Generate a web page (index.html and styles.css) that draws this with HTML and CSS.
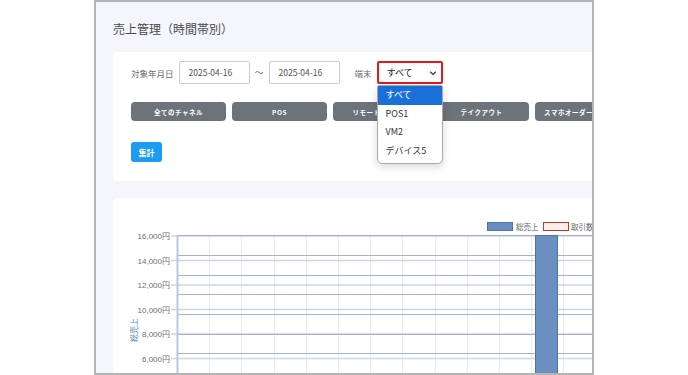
FILE: index.html
```html
<!DOCTYPE html>
<html lang="ja">
<head>
    <meta charset="UTF-8">
    <meta name="viewport" content="width=device-width, initial-scale=1.0">
    <title>売上管理（時間帯別）</title>
    <link rel="stylesheet" href="styles.css">
</head>
<body>

    <div class="frame">
        <div class="page">
            <h2 class="page-title">売上管理（時間帯別）</h2>

            <!-- Search conditions -->
            <div class="card search-card">
                <div class="filter-row">
                    <span class="filter-label">対象年月日</span>
                    <div class="date-input">2025-04-16</div>
                    <span class="tilde">〜</span>
                    <div class="date-input">2025-04-16</div>
                    <span class="filter-label terminal-label">端末</span>
                    <div class="select-wrap">
                        <div class="select-box">
                            <span>すべて</span>
                            <svg class="chevron" width="8" height="6" viewBox="0 0 8 6"><path d="M1.2 1.8 L4 4.4 L6.8 1.8" fill="none" stroke="#333" stroke-width="1.2"/></svg>
                        </div>
                        <ul class="dropdown">
                            <li class="selected">すべて</li>
                            <li>POS1</li>
                            <li>VM2</li>
                            <li>デバイス5</li>
                        </ul>
                    </div>
                </div>

                <!-- Channel buttons -->
                <div class="channel-row">
                    <button class="channel-btn">全てのチャネル</button>
                    <button class="channel-btn">POS</button>
                    <button class="channel-btn">リモートオーダー</button>
                    <button class="channel-btn">テイクアウト</button>
                    <button class="channel-btn">スマホオーダー（店内）</button>
                </div>

                <button class="submit-btn">集計</button>
            </div>

            <!-- Chart -->
            <div class="card chart-card">
                <svg class="chart" width="480" height="180" viewBox="0 0 480 180">
                    <!-- legend -->
                    <rect x="374.5" y="24.5" width="25" height="8" fill="#6a8fc0" stroke="#4a74b0"/>
                    <text x="403" y="31.5" class="legend-text">総売上</text>
                    <rect x="430.5" y="24.5" width="25" height="8" fill="#fdeeee" stroke="#c0392b"/>
                    <text x="458" y="31.5" class="legend-text">取引数</text>

                    <!-- vertical grid -->
                    <g stroke="#e9ebf0" stroke-width="1">
                        <line x1="96.5" y1="37" x2="96.5" y2="180"/>
                        <line x1="128.5" y1="37" x2="128.5" y2="180"/>
                        <line x1="161.5" y1="37" x2="161.5" y2="180"/>
                        <line x1="193.5" y1="37" x2="193.5" y2="180"/>
                        <line x1="225.5" y1="37" x2="225.5" y2="180"/>
                        <line x1="257.5" y1="37" x2="257.5" y2="180"/>
                        <line x1="289.5" y1="37" x2="289.5" y2="180"/>
                        <line x1="322.5" y1="37" x2="322.5" y2="180"/>
                        <line x1="354.5" y1="37" x2="354.5" y2="180"/>
                        <line x1="386.5" y1="37" x2="386.5" y2="180"/>
                        <line x1="418.5" y1="37" x2="418.5" y2="180"/>
                        <line x1="450.5" y1="37" x2="450.5" y2="180"/>
                    </g>

                    <!-- left axis grid -->
                    <g stroke="#cbd7ec" stroke-width="1.5">
                        <line x1="58" y1="38" x2="480" y2="38"/>
                        <line x1="58" y1="62.5" x2="480" y2="62.5"/>
                        <line x1="58" y1="87" x2="480" y2="87"/>
                        <line x1="58" y1="111.5" x2="480" y2="111.5"/>
                        <line x1="58" y1="136" x2="480" y2="136"/>
                        <line x1="58" y1="160.5" x2="480" y2="160.5"/>
                    </g>

                    <!-- right axis grid -->
                    <g stroke="#a7b0d2" stroke-width="1">
                        <line x1="64" y1="37.5" x2="480" y2="37.5"/>
                        <line x1="64" y1="57.5" x2="480" y2="57.5"/>
                        <line x1="64" y1="77.5" x2="480" y2="77.5"/>
                        <line x1="64" y1="96.5" x2="480" y2="96.5"/>
                        <line x1="64" y1="116.5" x2="480" y2="116.5"/>
                        <line x1="64" y1="136.5" x2="480" y2="136.5"/>
                        <line x1="64" y1="155.5" x2="480" y2="155.5"/>
                        <line x1="64" y1="175.5" x2="480" y2="175.5"/>
                    </g>

                    <line x1="64.5" y1="37" x2="64.5" y2="180" stroke="#bcc6de" stroke-width="2"/>

                    <!-- y labels -->
                    <g class="axis-text" text-anchor="end">
                        <text x="57" y="41">16,000円</text>
                        <text x="57" y="65.5">14,000円</text>
                        <text x="57" y="90">12,000円</text>
                        <text x="57" y="114.5">10,000円</text>
                        <text x="57" y="139">8,000円</text>
                        <text x="57" y="163.5">6,000円</text>
                    </g>
                    <text class="axis-title" transform="translate(24 132) rotate(-90)" text-anchor="middle">総売上</text>

                    <!-- bar -->
                    <rect x="422.5" y="37.5" width="22" height="145" fill="#6a8fc0" stroke="#4a74b0"/>
                </svg>
            </div>
        </div>
    </div>

</body>
</html>
```

FILE: styles.css
```css
body {
    margin: 0;
    padding: 0;
    background-color: #ffffff;
    font-family: "Noto Sans CJK JP", "Noto Sans", sans-serif;
}

.frame {
    margin-left: 94px;
    width: 500px;
    height: 375px;
    box-sizing: border-box;
    border: 2px solid #b4b4b4;
    background-color: #f4f6fb;
    overflow: hidden;
}

.page {
    width: 700px;
    padding: 18px 0 0 17px;
}

.page-title {
    margin: 0 0 14px;
    font-size: 12px;
    line-height: 18px;
    font-weight: normal;
    color: #4a4a4a;
}

.card {
    background-color: #ffffff;
    border-radius: 4px;
    width: 640px;
}

.search-card {
    padding: 9px 0 19px 18px;
}

.filter-row {
    display: flex;
    align-items: center;
    height: 23px;
}

.filter-label {
    font-size: 8.5px;
    color: #6b6b6b;
    margin-right: 5px;
}

.terminal-label {
    margin-left: 15px;
}

.date-input {
    width: 71px;
    height: 23px;
    box-sizing: border-box;
    border: 1px solid #c8ccd2;
    border-radius: 2px;
    font-size: 8.5px;
    color: #555;
    line-height: 21px;
    padding-left: 9px;
}

.tilde {
    width: 19px;
    text-align: center;
    font-size: 9px;
    color: #777;
}

.select-wrap {
    position: relative;
}

.select-box {
    width: 66px;
    height: 23px;
    box-sizing: border-box;
    border: 2px solid #e31b1b;
    border-radius: 2px;
    display: flex;
    align-items: center;
    justify-content: space-between;
    padding: 0 4px 0 8px;
    font-size: 9px;
    color: #222;
}

.chevron {
    display: block;
}

.dropdown {
    position: absolute;
    top: 24px;
    left: 0;
    width: 66px;
    box-sizing: border-box;
    margin: 0;
    padding: 0 0 3px;
    list-style: none;
    background-color: #ffffff;
    border: 1px solid #a9a9a9;
    border-radius: 2px 2px 5px 5px;
    box-shadow: 0 3px 8px rgba(0, 0, 0, 0.15);
    z-index: 2;
}

.dropdown li {
    height: 18.5px;
    line-height: 18.5px;
    padding-left: 8px;
    font-size: 9px;
    color: #333;
}

.dropdown li.selected {
    background-color: #1b6fd8;
    color: #ffffff;
}

.channel-row {
    display: flex;
    gap: 6px;
    margin-top: 18px;
}

.channel-btn {
    width: 95px;
    height: 19px;
    flex-shrink: 0;
    border: none;
    border-radius: 4px;
    background-color: #6c737b;
    color: #ffffff;
    font-family: inherit;
    font-size: 6.5px;
    font-weight: bold;
    letter-spacing: 0.5px;
    padding: 0;
    white-space: nowrap;
    overflow: hidden;
}

.submit-btn {
    display: block;
    margin-top: 21px;
    width: 31px;
    height: 20px;
    border: none;
    border-radius: 3px;
    background-color: #1d9bf0;
    color: #ffffff;
    font-family: inherit;
    font-size: 8px;
    font-weight: bold;
    padding: 0;
}

.chart-card {
    margin-top: 17px;
    height: 200px;
}

.chart {
    display: block;
}

.legend-text {
    font-size: 7.5px;
    fill: #666;
}

.axis-text {
    font-family: "Liberation Sans", "Noto Sans CJK JP", sans-serif;
    font-size: 8px;
    fill: #6e6e6e;
}

.axis-title {
    font-size: 8px;
    fill: #5b7fb5;
}
```
